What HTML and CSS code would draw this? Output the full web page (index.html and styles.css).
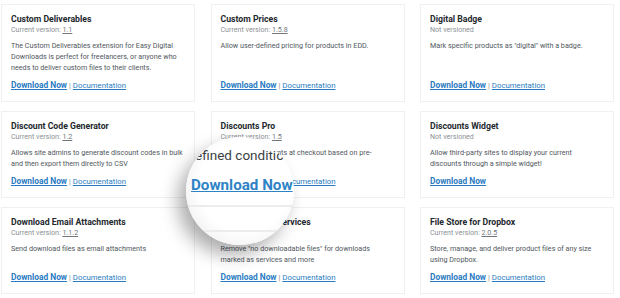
FILE: index.html
```html
<!DOCTYPE html>
<html lang="en">
<head>
  <meta charset="UTF-8">
  <meta name="viewport" content="width=device-width, initial-scale=1.0">
  <title>Extensions</title>
  <link rel="stylesheet" href="styles.css">
</head>
<body>
  <div class="page">
    <div class="grid">
      <div class="card">
        <h3>Custom Deliverables</h3>
        <div class="ver">Current version: <span class="num">1.1</span></div>
        <p>The Custom Deliverables extension for Easy Digital Downloads is perfect for freelancers, or anyone who needs to deliver custom files to their clients.</p>
        <div class="links"><a href="#" class="dl">Download Now</a> <span class="sep">|</span> <a href="#">Documentation</a></div>
      </div>

      <div class="card">
        <h3>Custom Prices</h3>
        <div class="ver">Current version: <span class="num">1.5.8</span></div>
        <p>Allow user-defined pricing for products in EDD.</p>
        <div class="links"><a href="#" class="dl">Download Now</a> <span class="sep">|</span> <a href="#">Documentation</a></div>
      </div>

      <div class="card">
        <h3>Digital Badge</h3>
        <div class="ver">Not versioned</div>
        <p>Mark specific products as "digital" with a badge.</p>
        <div class="links"><a href="#" class="dl">Download Now</a> <span class="sep">|</span> <a href="#">Documentation</a></div>
      </div>

      <div class="card">
        <h3>Discount Code Generator</h3>
        <div class="ver">Current version: <span class="num">1.2</span></div>
        <p>Allows site admins to generate discount codes in bulk and then export them directly to CSV</p>
        <div class="links"><a href="#" class="dl">Download Now</a> <span class="sep">|</span> <a href="#">Documentation</a></div>
      </div>

      <div class="card">
        <h3>Discounts Pro</h3>
        <div class="ver">Current version: <span class="num">1.5</span></div>
        <p>Add smart discounts at checkout based on pre-<br>defined conditions</p>
        <div class="links"><a href="#" class="dl">Download Now</a> <span class="sep">|</span> <a href="#">Documentation</a></div>
      </div>

      <div class="card">
        <h3>Discounts Widget</h3>
        <div class="ver">Not versioned</div>
        <p>Allow third-party sites to display your current discounts through a simple widget!</p>
        <div class="links"><a href="#" class="dl">Download Now</a></div>
      </div>

      <div class="card">
        <h3>Download Email Attachments</h3>
        <div class="ver">Current version: <span class="num">1.1.2</span></div>
        <p>Send download files as email attachments</p>
        <div class="links"><a href="#" class="dl">Download Now</a> <span class="sep">|</span> <a href="#">Documentation</a></div>
      </div>

      <div class="card">
        <h3>Downloads as Services</h3>
        <div class="ver">Not versioned</div>
        <p>Remove "no downloadable files" for downloads marked as services and more</p>
        <div class="links"><a href="#" class="dl">Download Now</a> <span class="sep">|</span> <a href="#">Documentation</a></div>
      </div>

      <div class="card">
        <h3>File Store for Dropbox</h3>
        <div class="ver">Current version: <span class="num">2.0.5</span></div>
        <p>Store, manage, and deliver product files of any size using Dropbox.</p>
        <div class="links"><a href="#" class="dl">Download Now</a> <span class="sep">|</span> <a href="#">Documentation</a></div>
      </div>
    </div>

    <!-- magnifier over the Discounts Pro card -->
    <div class="lens">
      <div class="lens-text">defined conditions</div>
      <a href="#" class="lens-link">Download Now</a>
      <div class="lens-line"></div>
      <div class="lens-line second"></div>
    </div>
  </div>
</body>
</html>
```

FILE: styles.css
```css
body {
  margin: 0;
  background: #fff;
  font-family: Roboto, "Liberation Sans", sans-serif;
}

.page {
  position: relative;
  width: 620px;
  height: 298px;
  overflow: hidden;
}

.grid {
  display: grid;
  grid-template-columns: repeat(3, 194px);
  column-gap: 15.5px;
  row-gap: 9px;
  padding: 4px 0 0 1px;
}

.card {
  display: flex;
  flex-direction: column;
  border: 1px solid #eef0f2;
  padding: 8px 9px 9px;
}

.card h3 {
  margin: 0;
  font-size: 8.7px;
  line-height: 12px;
  font-weight: 700;
  color: #23282d;
}

.ver {
  font-size: 7.1px;
  line-height: 10px;
  color: #8c9196;
}

.ver .num {
  color: #72777c;
  text-decoration: underline;
}

.card p {
  margin: 4.5px 0 0;
  font-size: 7.2px;
  line-height: 11px;
  color: #50575e;
}

.links {
  margin-top: auto;
  padding-top: 6.5px;
  font-size: 7.8px;
  line-height: 12px;
  color: #8c9196;
}

.links a {
  color: #2a7cc2;
  text-decoration: underline;
}

.links a.dl {
  font-weight: 700;
  font-size: 8.4px;
}

.lens {
  position: absolute;
  left: 186px;
  top: 137px;
  width: 108px;
  height: 108px;
  border-radius: 50%;
  overflow: hidden;
  padding: 8px 0 0 5px;
  box-sizing: border-box;
  background: radial-gradient(circle at 55% 45%, #fff 55%, #f1f1f1 80%, #dcdcdc 100%);
  box-shadow: -8px 10px 18px rgba(0, 0, 0, 0.32);
}

.lens-text {
  margin-left: -3.5px;
  font-size: 13.5px;
  line-height: 20px;
  color: #3a3f44;
  white-space: nowrap;
}

.lens-link {
  display: block;
  margin-top: 10px;
  font-size: 15.2px;
  line-height: 20px;
  font-weight: 700;
  color: #2e83c6;
  text-decoration: underline;
  white-space: nowrap;
}

.lens-line {
  height: 2px;
  margin: 10px 0 0 -5px;
  background: #ececec;
}

.lens-line.second {
  margin-top: 23px;
}
```
